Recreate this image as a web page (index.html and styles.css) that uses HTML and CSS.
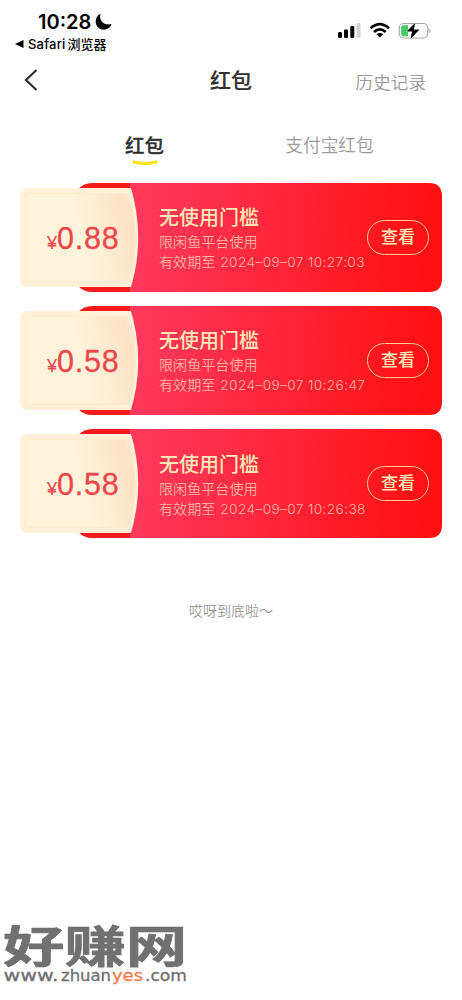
FILE: index.html
```
<!DOCTYPE html>
<html lang="zh-CN">
<head>
<meta charset="utf-8">
<title>红包</title>
<link rel="stylesheet" href="styles.css">
</head>
<body>
<svg class="defs" width="0" height="0" aria-hidden="true">
  <defs>
    <linearGradient id="red" gradientUnits="userSpaceOnUse" x1="120" y1="40" x2="415" y2="69"><stop offset="0" stop-color="#ff385c"/><stop offset="1" stop-color="#ff0f10"/></linearGradient>
    <linearGradient id="cream" x1="0" y1="0.6" x2="1" y2="0.4"><stop offset="0.5" stop-color="#fff3dc"/><stop offset="0.95" stop-color="#fde2c6"/><stop offset="1" stop-color="#fee8d0"/></linearGradient>
    <symbol id="ticket" viewBox="0 0 422 109">
      <path fill="#f31b1c" d="M58 6Q64 0 72 0H112V109H72Q64 109 58 103Z"/>
      <path fill="#fff0d7" d="M8 5H112V104H8Q0 104 0 96V13Q0 5 8 5Z"/>
      <path fill="url(#cream)" stroke="#fcebcf" stroke-width="1" d="M10 10.500H118V98.500H10Q5.500 98.500 5.500 94V15Q5.500 10.500 10 10.500Z"/>
      <path fill="none" stroke="#fff0d7" stroke-width="4" d="M109 2Q126 54.500 109 107"/>
      <path fill="url(#red)" d="M109.500 0H409Q422 0 422 13V96Q422 109 409 109H109.500Q127 54.500 109.500 0Z"/>
      <path fill="#f31b1c" d="M100 0H109.500L111 5H100ZM100 104H111L109.500 109H100Z"/>
    </symbol>
  </defs>
</svg>
<div class="status">
  <div class="status-left">
    <div class="clock"><span>10:28</span><svg width="17" height="17" viewBox="0 0 17 17"><path d="M5.500 .8C-2 4 -.5 16.500 8.500 16.500C12.500 16.500 15.500 14.600 16.500 11C9.500 13 3.500 7.500 5.500 .8Z"/></svg></div>
    <div class="back-app"><svg width="9" height="8" viewBox="0 0 9 8"><path d="M0 4L8.500 0V8Z"/></svg><span class="safari">Safari</span><span>浏览器</span></div>
  </div>
  <svg class="status-icons" width="96" height="20" viewBox="0 0 96 20">
    <rect x="2" y="12" width="4" height="6" rx="1.300"/><rect x="8" y="9.500" width="4" height="8.500" rx="1.300"/><rect x="14.300" y="6" width="4" height="12" rx="1.300"/><rect x="20.500" y="3" width="4" height="15" rx="1.300" fill="#d2d2d4"/>
    <g fill="none" stroke="#000" stroke-width="2.700" transform="translate(1 0)"><path d="M33.500 8.300Q42.800 0 52 8.300"/><path d="M37 12Q42.800 6.800 48.700 12"/></g><path d="M40.500 14.300Q43.800 11.700 47.100 14.300L43.800 17.600Z"/>
    <g transform="translate(1 0)"><rect x="62.200" y="3.500" width="28.600" height="14.500" rx="4.500" fill="#fff" stroke="#a5a5a5" stroke-width="1.200"/><path d="M66.500 5.300H71V16.200H66.500Q64.200 16.200 64.200 14V7.500Q64.200 5.300 66.500 5.300Z" fill="#43cc66"/><path d="M92.300 8.500Q95 10.700 92.300 13Z" fill="#a5a5a5"/><path d="M78.500 2.500L69.500 11.600H75L73.500 19L82.500 9.400H76.700Z" stroke="#fff" stroke-width="1" paint-order="stroke"/></g>
  </svg>
</div>
<header class="nav">
  <svg class="chevron" width="14" height="23" viewBox="0 0 14 23"><path d="M12.500 1L2 11L12.500 21"/></svg>
  <h1>红包</h1>
  <a class="history">历史记录</a>
</header>
<nav class="tabs">
  <div class="tab active"><span>红包</span><svg width="26" height="6" viewBox="0 0 26 6"><path d="M2 2Q13 5 24 2"/></svg></div>
  <div class="tab">支付宝红包</div>
</nav>
<main class="list">
  <article class="card">
    <svg class="card-bg"><use href="#ticket"/></svg>
    <div class="amount"><small>¥</small><span>0.88</span></div>
    <div class="info"><h2>无使用门槛</h2><p>限闲鱼平台使用</p><p>有效期至 <time>2024–09–07 10:27:03</time></p></div>
    <a class="view">查看</a>
  </article>
  <article class="card">
    <svg class="card-bg"><use href="#ticket"/></svg>
    <div class="amount"><small>¥</small><span>0.58</span></div>
    <div class="info"><h2>无使用门槛</h2><p>限闲鱼平台使用</p><p>有效期至 <time>2024–09–07 10:26:47</time></p></div>
    <a class="view">查看</a>
  </article>
  <article class="card">
    <svg class="card-bg"><use href="#ticket"/></svg>
    <div class="amount"><small>¥</small><span>0.58</span></div>
    <div class="info"><h2>无使用门槛</h2><p>限闲鱼平台使用</p><p>有效期至 <time>2024–09–07 10:26:38</time></p></div>
    <a class="view">查看</a>
  </article>
</main>
<p class="end">哎呀到底啦～</p>
<footer class="brand">
  <svg width="200" height="80" viewBox="0 0 200 80">
    <text class="brand-name" transform="translate(3 43) scale(1.280 .92)">好赚网</text>
    <g class="brand-url">
      <text x="3.500" y="61" textLength="55" lengthAdjust="spacingAndGlyphs">www.</text>
      <text x="61" y="61" textLength="50" lengthAdjust="spacingAndGlyphs">zhuan</text>
      <text class="accent" x="112" y="61" textLength="31" lengthAdjust="spacingAndGlyphs">yes</text>
      <text x="145" y="61" textLength="42" lengthAdjust="spacingAndGlyphs">.com</text>
    </g>
  </svg>
</footer>
</body>
</html>
```
FILE: styles.css
```
* { box-sizing: border-box; }
body {
  margin: 0;
  height: 1000px;
  display: flex;
  flex-direction: column;
  overflow: hidden;
  background: #fff;
  color: #303030;
  font-family: Inter, "Noto Sans CJK SC", sans-serif;
}
h1, h2, p { margin: 0; }
svg { display: block; flex: none; }
.defs { position: absolute; }
.status { height: 55px; display: flex; justify-content: space-between; padding: 10px 30px 0 15px; color: #000; }
.clock { display: flex; gap: 4px; padding-left: 23px; height: 24px; font-size: 20px; line-height: 24px; font-weight: 600; }
.clock svg { margin-top: 3px; }
.back-app { display: flex; align-items: center; height: 20px; font-size: 13px; line-height: 20px; font-weight: 500; }
.safari { margin: 0 2px 0 4px; letter-spacing: .2px; }
.status-icons { margin-top: 10px; }
.nav { height: 50px; display: grid; grid-template-columns: 1fr auto 1fr; align-items: center; padding: 0 36px 0 24px; }
.chevron { fill: none; stroke: #303030; stroke-width: 2.2; }
.nav h1 { font-size: 21px; line-height: 30px; font-weight: 500; -webkit-text-stroke: .2px #303030; padding-left: 12px; padding-top: 1px; }
.history { justify-self: end; color: #999; font-size: 17.6px; font-weight: 350; padding-top: 3px; }
.tabs { height: 77.5px; display: grid; grid-template-columns: 185px 185px; justify-content: center; text-align: center; padding: 27px 0 0 12px; }
.tab { font-size: 17.7px; line-height: 28px; color: #999; font-weight: 350; }
.tab.active { color: #303030; font-size: 19.5px; font-weight: 500; display: flex; flex-direction: column; align-items: center; -webkit-text-stroke: .3px #303030; }
.tab svg { fill: none; stroke: #f6e421; stroke-width: 3.3; stroke-linecap: round; }
.list { display: flex; flex-direction: column; gap: 14.3px; padding: 0 20px; }
.card { position: relative; isolation: isolate; height: 109px; display: grid; grid-template-columns: 139px 1fr 62px; padding-right: 13px; align-items: center; }
.card-bg { position: absolute; inset: 0; width: 422px; height: 109px; z-index: -1; }
.amount { display: flex; align-items: baseline; color: #ed464b; padding: 6px 0 0 27px; font-size: 30.5px; line-height: 36px; font-family: "Liberation Sans", sans-serif; -webkit-text-stroke: .3px #ed464b; letter-spacing: .8px; }
.amount small { font-size: 18px; letter-spacing: 0; -webkit-text-stroke: .1px #ed464b; }
.info { color: #ffb3a1; font-size: 14.1px; line-height: 20px; white-space: nowrap; font-weight: 350; padding-top: 2px; }
.info h2 { color: #ffe8b7; font-size: 20px; line-height: 28px; font-weight: 500; margin-bottom: 0; }
.info time { font-family: Inter, sans-serif; font-weight: 300; font-size: 13.7px; letter-spacing: .36px; margin-left: 1px; }
.view { height: 35px; border: 1.5px solid #ffc98d; border-radius: 18px; color: #ffe8b7; font-size: 17px; line-height: 32px; text-align: center; font-weight: 500; }
.end { margin-top: 63px; text-align: center; font-size: 14px; line-height: 20px; color: #999; font-weight: 350; }
.brand { margin-top: auto; height: 80px; }
.brand-name { font: 700 48px/1 "Noto Sans CJK SC", sans-serif; fill: #707070; stroke: #707070; stroke-width: .8; stroke-linejoin: round; }
.brand-url { font: 15.5px "DejaVu Sans", sans-serif; fill: #707070; stroke: #707070; stroke-width: .3; }
.brand-url .accent { fill: #f77b50; stroke: #f77b50; }
```
